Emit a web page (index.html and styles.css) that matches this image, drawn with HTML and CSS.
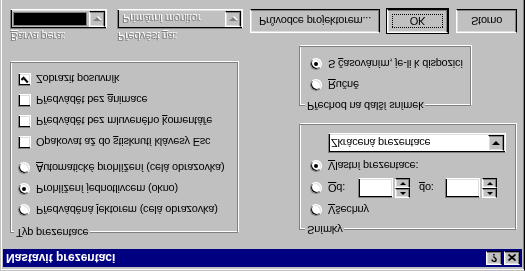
FILE: index.html
```html
<!DOCTYPE html>
<html lang="cs">
<head>
    <meta charset="UTF-8">
    <title>Nastavit prezentaci</title>
    <link rel="stylesheet" href="styles.css">
</head>
<body>
<div class="screen">
<div class="window">
    <!-- Titulek okna -->
    <div class="titlebar">
        <span class="title">Nastavit prezentaci</span>
        <div class="caption-buttons">
            <div class="cap raised">?</div>
            <div class="cap raised">
                <svg width="8" height="7" viewBox="0 0 8 7"><path d="M0.5 0.5l7 6M7.5 0.5l-7 6" stroke="#000" stroke-width="1.7" fill="none"/></svg>
            </div>
        </div>
    </div>

    <div class="body">
        <div class="columns">
            <!-- Typ prezentace -->
            <div class="group group-type">
                <span class="group-title">Typ prezentace</span>
                <div class="option"><span class="radio"></span><span>Předváděná <u>l</u>ektorem (celá obrazovka)</span></div>
                <div class="option"><span class="radio checked"></span><span>Prohlížení <u>j</u>ednotlivcem (okno)</span></div>
                <div class="option"><span class="radio"></span><span><u>A</u>utomatické prohlížení (celá obrazovka)</span></div>
                <div class="option first-check"><span class="check"></span><span>Opakovat až do <u>s</u>tisknutí klávesy Esc</span></div>
                <div class="option"><span class="check"></span><span>Předvádět bez mluveného <u>k</u>omentáře</span></div>
                <div class="option"><span class="check"></span><span>Předvádět bez <u>a</u>nimace</span></div>
                <div class="option"><span class="check">
                    <svg width="9" height="9" viewBox="0 0 9 9"><path d="M1.5 4l2 2.2L7.8 1.5" stroke="#000" stroke-width="2" fill="none"/></svg>
                </span><span>Zobrazit posuvník</span></div>
            </div>

            <div class="right-col">
                <!-- Snímky -->
                <div class="group group-slides">
                    <span class="group-title">Snímky</span>
                    <div class="option"><span class="radio"></span><span><u>V</u>šechny</span></div>
                    <div class="option range-row">
                        <span class="radio"></span>
                        <span class="range-label"><u>O</u>d:</span>
                        <span class="edit"></span>
                        <span class="spin">
                            <span class="spin-btn raised"><span class="arrow-up"></span></span>
                            <span class="spin-btn raised"><span class="arrow-down"></span></span>
                        </span>
                        <span class="range-label to"><u>d</u>o:</span>
                        <span class="edit"></span>
                        <span class="spin">
                            <span class="spin-btn raised"><span class="arrow-up"></span></span>
                            <span class="spin-btn raised"><span class="arrow-down"></span></span>
                        </span>
                    </div>
                    <div class="option"><span class="radio checked"></span><span><u>V</u>lastní prezentace:</span></div>
                    <div class="combo combo-show">
                        <span class="combo-text">Zkrácená prezentace</span>
                        <span class="combo-btn raised"><span class="arrow-down"></span></span>
                    </div>
                </div>

                <!-- Přechod na další snímek -->
                <div class="group group-advance">
                    <span class="group-title">Přechod na další snímek</span>
                    <div class="option"><span class="radio"></span><span><u>R</u>učně</span></div>
                    <div class="option"><span class="radio checked"></span><span>S <u>č</u>asováním, je-li k dispozici</span></div>
                </div>
            </div>
        </div>

        <!-- Spodní řádek -->
        <div class="footer">
            <div class="field field-pen">
                <span class="field-label disabled"><u>B</u>arva pera:</span>
                <div class="combo combo-off">
                    <span class="swatch"></span>
                    <span class="combo-btn raised"><span class="arrow-down off"></span></span>
                </div>
            </div>
            <div class="field field-monitor">
                <span class="field-label disabled">Předvést <u>n</u>a:</span>
                <div class="combo combo-off">
                    <span class="combo-text disabled">Primární monitor</span>
                    <span class="combo-btn raised"><span class="arrow-down off"></span></span>
                </div>
            </div>
            <div class="btn raised btn-wizard">Průvodce projektorem...</div>
            <div class="btn raised btn-default btn-ok">OK</div>
            <div class="btn raised btn-cancel">Storno</div>
        </div>
    </div>
</div>
</div>
</body>
</html>
```

FILE: styles.css
```css
/* Celá stránka */
body {
    margin: 0;
    background-color: #c0c0c0;
    font-family: 'Liberation Sans', Arial, sans-serif;
    font-size: 11px;
    letter-spacing: -0.2px;
    color: #000;
}

/* Snímek je převrácený vzhůru nohama */
.screen {
    width: 525px;
    height: 271px;
    overflow: hidden;
    transform: scaleY(-1);
}

.window {
    box-sizing: border-box;
    width: 525px;
    height: 290px;
    background-color: #c0c0c0;
    border: 1px solid;
    border-color: #c0c0c0 #000 #000 #c0c0c0;
    box-shadow: inset 1px 1px 0 #fff, inset -1px -1px 0 #808080;
    padding: 3px 2px 2px 2px;
}

/* Titulek */
.titlebar {
    height: 18px;
    background-color: #000080;
    color: #fff;
    font-weight: bold;
    font-size: 12px;
    letter-spacing: 0;
    display: flex;
    align-items: center;
    justify-content: space-between;
    padding: 0 2px 0 3px;
}

.caption-buttons {
    display: flex;
    gap: 2px;
}

.cap {
    box-sizing: border-box;
    width: 16px;
    height: 14px;
    display: flex;
    align-items: center;
    justify-content: center;
    color: #000;
    font-weight: bold;
    font-size: 11px;
}

/* Vystouplé tlačítko */
.raised {
    background-color: #c0c0c0;
    border: 1px solid;
    border-color: #fff #000 #000 #fff;
    box-shadow: inset -1px -1px 0 #808080, inset 1px 1px 0 #dfdfdf;
}

.body {
    padding: 16px 0 0 7px;
}

.columns {
    display: flex;
    align-items: flex-start;
    gap: 61px;
}

/* Skupiny */
.group {
    position: relative;
    box-sizing: border-box;
    border: 1px solid #808080;
    box-shadow: inset 1px 1px 0 #fff, 1px 1px 0 #fff;
}

.group-title {
    position: absolute;
    top: -7px;
    left: 5px;
    padding: 0 2px;
    line-height: 13px;
    background-color: #c0c0c0;
}

.group-type {
    width: 228px;
    padding: 11px 0 6px 7px;
}

.group-type .group-title {
    left: 3px;
}

.right-col {
    margin-top: 3px;
}

.group-slides {
    width: 217px;
    padding: 8px 0 8px 10px;
}

.group-advance {
    width: 172px;
    margin-top: 18px;
    padding: 9px 0 7px 10px;
}

.option {
    display: flex;
    align-items: center;
    height: 21px;
    gap: 5px;
    white-space: nowrap;
}

.first-check {
    margin-top: 5px;
}

/* Přepínač */
.radio {
    position: relative;
    box-sizing: border-box;
    width: 12px;
    height: 12px;
    margin-right: 1px;
    border-radius: 50%;
    background-color: #fff;
    border: 1px solid;
    border-color: #808080 #fff #fff #808080;
    box-shadow: inset 1px 1px 0 #000, inset -1px -1px 0 #dfdfdf;
}

.radio.checked::after {
    content: '';
    position: absolute;
    left: 3px;
    top: 3px;
    width: 4px;
    height: 4px;
    border-radius: 50%;
    background-color: #000;
}

/* Zaškrtávací pole */
.check {
    box-sizing: border-box;
    width: 13px;
    height: 13px;
    background-color: #fff;
    border: 1px solid;
    border-color: #808080 #fff #fff #808080;
    box-shadow: inset 1px 1px 0 #000, inset -1px -1px 0 #dfdfdf;
    display: flex;
    align-items: center;
    justify-content: center;
}

/* Rozsah Od - do */
.range-row {
    height: 23px;
    gap: 0;
}

.range-row .radio {
    margin-right: 6px;
}

.range-label {
    width: 30px;
}

.range-label.to {
    width: 26px;
    margin-left: 9px;
}

.edit {
    box-sizing: border-box;
    width: 35px;
    height: 20px;
    background-color: #fff;
    border: 1px solid;
    border-color: #808080 #fff #fff #808080;
    box-shadow: inset 1px 1px 0 #000, inset -1px -1px 0 #dfdfdf;
}

.spin {
    display: flex;
    flex-direction: column;
    width: 15px;
    height: 20px;
    margin-left: 2px;
}

.spin-btn {
    box-sizing: border-box;
    flex: 1;
    display: flex;
    align-items: center;
    justify-content: center;
}

.arrow-up,
.arrow-down {
    width: 0;
    height: 0;
    border-left: 3px solid transparent;
    border-right: 3px solid transparent;
}

.arrow-up {
    border-bottom: 3px solid #000;
}

.arrow-down {
    border-top: 3px solid #000;
}

.combo-btn .arrow-down {
    border-left-width: 4px;
    border-right-width: 4px;
    border-top-width: 4px;
}

.arrow-down.off {
    border-top-color: #808080;
    filter: drop-shadow(1px 1px 0 #fff);
}

/* Rozbalovací seznam */
.combo {
    box-sizing: border-box;
    display: flex;
    height: 20px;
    padding: 1px;
    background-color: #fff;
    border: 1px solid;
    border-color: #808080 #fff #fff #808080;
    box-shadow: inset 1px 1px 0 #000, inset -1px -1px 0 #dfdfdf;
}

.combo-off {
    background-color: #c0c0c0;
}

.combo-text {
    flex: 1;
    padding-left: 1px;
    line-height: 16px;
    white-space: nowrap;
}

.combo-btn {
    box-sizing: border-box;
    width: 16px;
    height: 16px;
    display: flex;
    align-items: center;
    justify-content: center;
}

.combo-show {
    width: 178px;
    margin: 3px 0 0 18px;
}

.swatch {
    flex: 1;
    margin: 1px 2px 1px 1px;
    background-color: #000;
    border: 1px solid #808080;
}

.disabled {
    color: #808080;
    text-shadow: 1px 1px 0 #fff;
}

/* Spodní řádek */
.footer {
    display: flex;
    align-items: flex-end;
    margin-top: 3px;
}

.field {
    display: flex;
    flex-direction: column;
}

.field-label {
    line-height: 13px;
    margin-bottom: 1px;
    white-space: nowrap;
}

.field-pen {
    width: 97px;
    margin-right: 10px;
}

.field-monitor {
    width: 126px;
    margin-right: 7px;
}

.field-monitor .combo-text {
    padding-left: 3px;
}

.btn {
    position: relative;
    box-sizing: border-box;
    height: 24px;
    display: flex;
    align-items: center;
    justify-content: center;
    white-space: nowrap;
}

.btn-wizard {
    width: 130px;
    margin-right: 7px;
}

.btn-ok {
    width: 61px;
    margin-right: 8px;
}

.btn-cancel {
    width: 61px;
}

.btn-default {
    outline: 1px solid #000;
    outline-offset: 0;
    border-color: #fff #000 #000 #fff;
}

.btn-default::after {
    content: '';
    position: absolute;
    left: 4px;
    right: 4px;
    top: 4px;
    bottom: 4px;
    border: 1px dotted #000;
}
```
